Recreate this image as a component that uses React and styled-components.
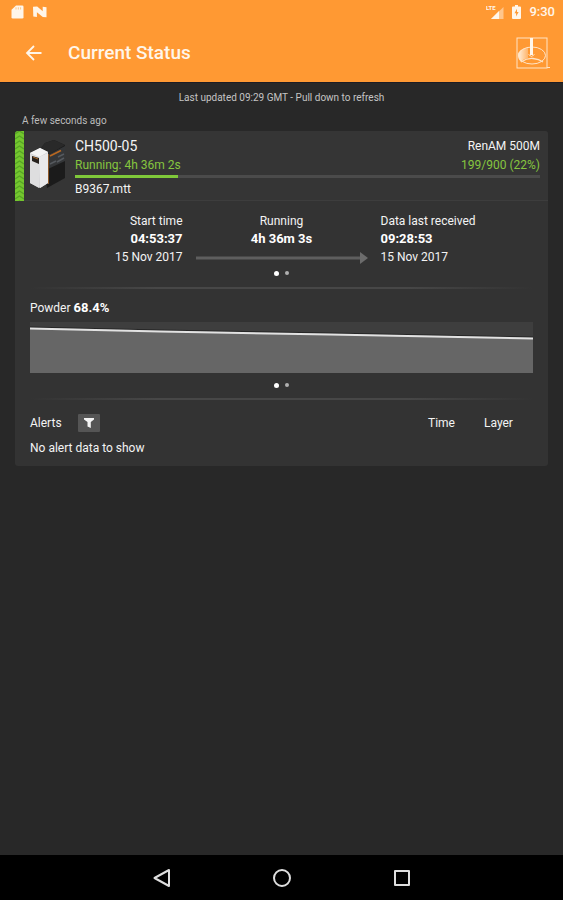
import React from "react";
import styled, { createGlobalStyle, css } from "styled-components";

const GlobalStyle = createGlobalStyle`
  *, *::before, *::after { box-sizing: border-box; }
  body {
    margin: 0;
    background: #282828;
    color: #f4f4f4;
    font-family: Roboto, "Liberation Sans", sans-serif;
    font-size: 12px;
    line-height: 18px;
  }
`;

const Screen = styled.div`
  min-height: 100vh;
  display: flex;
  flex-direction: column;
`;

const Header = styled.header`
  background: #ff9933;
  color: #fff6ea;
  border-bottom: 1px solid #1d1c24;
`;

const StatusBar = styled.div`
  height: 24px;
  padding: 0 8px 0 11px;
  display: flex;
  align-items: center;
  justify-content: space-between;
`;

const StatusGroup = styled.div`
  display: flex;
  align-items: center;
  gap: ${(p) => p.$gap}px;
`;

const Clock = styled.time`
  font-size: 13px;
  font-weight: 500;
`;

const AppBar = styled.div`
  height: 58px;
  padding: 0 12px 0 22px;
  display: flex;
  align-items: center;
`;

const IconButton = styled.button`
  display: flex;
  align-items: center;
  justify-content: center;
  padding: 0;
  border: 0;
  background: none;
  color: inherit;
`;

const PageTitle = styled.h1`
  flex: 1;
  margin: 0 0 0 22px;
  font-size: 19px;
  line-height: 24px;
  font-weight: 500;
`;

const Main = styled.main`
  flex: 1;
  padding: 6px 15px 0;
`;

const Notice = styled.p`
  margin: 0;
  font-size: 10px;
  text-align: center;
  color: #c4c4c4;
`;

const Age = styled.p`
  margin: 6px 0 0 7px;
  font-size: 10px;
  line-height: 16px;
  color: #bcbcbc;
`;

const Card = styled.article`
  margin-top: 2px;
  background: #333333;
  border-radius: 3px;
  overflow: hidden;
`;

const Machine = styled.section`
  display: flex;
  height: 70px;
  padding-right: 8px;
  background: #353535;
  border-bottom: 1px solid #3d3d3d;
`;

const Stripe = styled.svg`
  flex: none;
  width: 9px;
  height: 70px;
`;

const Picture = styled.svg`
  flex: none;
  width: 36px;
  height: 54px;
  margin: 6px 9px 0 6px;
`;

const Details = styled.div`
  flex: 1;
  padding-top: 6px;
`;

const Line = styled.div`
  display: flex;
  align-items: center;
  justify-content: space-between;
  height: ${(p) => (p.$title ? 18 : 20)}px;
  color: ${(p) => (p.$running ? "#86c63f" : "inherit")};
`;

const MachineName = styled.h2`
  margin: 0;
  font-size: 14px;
  font-weight: 400;
`;

const Track = styled.div`
  height: 3px;
  background: #4b4b4b;
`;

const Fill = styled.div`
  height: 100%;
  background: #7fc83a;
`;

const FileName = styled.div`
  margin-top: 2px;
`;

const Times = styled.section`
  display: grid;
  grid-template-columns: 1fr 172px 1fr;
  column-gap: 13px;
  padding-top: 11px;
`;

const TimeBlock = styled.div`
  display: flex;
  flex-direction: column;
  text-align: ${(p) => p.$align};
`;

const Value = styled.strong`
  font-size: 13px;
  font-weight: 700;
  color: #ffffff;
`;

const Arrow = styled.svg`
  width: 100%;
  height: 12px;
  margin-top: 4px;
`;

const Pager = styled.nav`
  display: flex;
  justify-content: center;
  gap: 1px;
  height: 10px;
  margin-top: ${(p) => p.$gap}px;
`;

const PageDot = styled.button`
  display: flex;
  align-items: center;
  justify-content: center;
  width: 10px;
  height: 10px;
  padding: 0;
  border: 0;
  background: none;

  &::before {
    content: "";
    border-radius: 50%;
    ${(p) =>
      p.$current
        ? css`width: 5px; height: 5px; background: #ffffff;`
        : css`width: 4px; height: 4px; background: #b0b0b0;`}
  }
`;

const Divider = styled.hr`
  height: 2px;
  margin: ${(p) => p.$gap}px 15px 0;
  border: 0;
  background: linear-gradient(to right, transparent, #474747 25%, #474747 75%, transparent);
`;

const Powder = styled.section`
  padding: 10px 15px 0;
`;

const SectionTitle = styled.h3`
  margin: 0;
  font-size: 12px;
  font-weight: 400;
`;

const Chart = styled.svg`
  display: block;
  width: 100%;
  height: 51px;
  margin-top: 5px;
  background: #3e3e3e;
`;

const AlertTable = styled.table`
  width: 100%;
  margin: 10px 0 6px;
  border-collapse: collapse;
  table-layout: fixed;

  th, td {
    padding: 0;
    font-weight: 400;
    text-align: left;
  }
  th { height: 26px; }
  td { height: 24px; padding-left: 15px; }
  th:first-child { padding-left: 15px; }
  th:nth-child(2) { width: 56px; }
  th:nth-child(3) { width: 64px; }
`;

const AlertHead = styled.div`
  display: flex;
  align-items: center;
  gap: 16px;
`;

const FilterButton = styled(IconButton)`
  width: 22px;
  height: 18px;
  background: #555555;
  border-radius: 1px;
  color: #f4f4f4;
`;

const SystemNav = styled.nav`
  display: flex;
  justify-content: center;
  height: 45px;
  background: #000000;
  color: #dedede;
`;

const SystemButton = styled(IconButton)`
  width: 120px;
`;

const CHEVRONS = Array.from({ length: 15 }, (_, i) => i * 5);

function Pages({ gap, label }) {
  return (
    <Pager $gap={gap} aria-label={label}>
      <PageDot $current aria-label="Page 1" aria-current="page" />
      <PageDot aria-label="Page 2" />
    </Pager>
  );
}

function TopBar() {
  return (
    <Header>
      <StatusBar>
        <StatusGroup $gap={9}>
          <svg width="13" height="14" viewBox="0 0 13 14" aria-hidden="true">
            <path d="M5 0.5H11.2Q12.5 .5 12.5 1.8V12.2Q12.5 13.5 11.2 13.5H1.8Q.5 13.5 .5 12.2V4.8Z" fill="#fff6ea" />
            <path d="M5 2.3V4.5M7.3 2.3V4.5M9.6 2.3V4.5" stroke="#ffc688" />
          </svg>
          <svg width="14" height="12" viewBox="0 0 14 12" aria-hidden="true">
            <path d="M0 .8L4.2 .5L9.7 5.3V.8L13.5 1.2V11.3L9.8 11L3.9 6.2V11L.3 10.5Z" fill="#fff6ea" />
          </svg>
        </StatusGroup>
        <StatusGroup $gap={8}>
          <svg width="18" height="16" viewBox="0 0 18 16" aria-hidden="true">
            <path d="M17.5 3V15H5Z" fill="#ffc68c" />
            <path d="M13 7V15H5Z" fill="#fff6ea" />
            <text x="0" y="6" fontSize="6" fontWeight="700" fill="#fff6ea">LTE</text>
          </svg>
          <svg width="9" height="14" viewBox="0 0 9 14" aria-hidden="true">
            <path d="M3 0H6V1.5H8Q9 1.5 9 2.5V13Q9 14 8 14H1Q0 14 0 13V2.5Q0 1.5 1 1.5H3Z" fill="#fff6ea" />
            <path d="M5 3.7L2.5 8.3H4.1V11.6L6.6 7H5Z" fill="#ff9933" />
          </svg>
          <Clock>9:30</Clock>
        </StatusGroup>
      </StatusBar>
      <AppBar>
        <IconButton aria-label="Back">
          <svg width="24" height="24" viewBox="0 0 24 24" fill="none" stroke="currentColor" strokeWidth="1.8" aria-hidden="true">
            <path d="M19.5 12H5.5M12 5L5 12L12 19" />
          </svg>
        </IconButton>
        <PageTitle>Current Status</PageTitle>
        <IconButton aria-label="Machine overview">
          <svg width="35" height="32" viewBox="0 0 35 32" fill="none" stroke="#ffe4c6" aria-hidden="true">
            <defs>
              <linearGradient id="sheen">
                <stop offset="0" stopColor="#fff0de" />
                <stop offset="1" stopColor="#ffb469" />
              </linearGradient>
            </defs>
            <rect x="1" y="1" width="30" height="30" />
            <path d="M2 18.5Q2 12 12 10.5V21Q7 22 5 25Q2 22 2 18.5Z" fill="url(#sheen)" stroke="none" />
            <ellipse cx="16" cy="18.5" rx="13.5" ry="8.5" />
            <path d="M5 25Q11 21 17 21.5T27 25" strokeWidth="1.3" />
            <path d="M15.5 1V18" stroke="#fff6ea" strokeWidth="3" />
            <path d="M12.5 17.5L15.5 19.5L18.5 17.5" />
            <path d="M31 30.5H34" />
          </svg>
        </IconButton>
      </AppBar>
    </Header>
  );
}

function MachineSummary() {
  return (
    <Machine>
      <Stripe viewBox="0 0 9 70" aria-hidden="true">
        <rect width="9" height="70" fill="#74c62e" />
        {CHEVRONS.map((y) => (
          <path key={y} d={`M0 ${y + 3}L4.5 ${y}L9 ${y + 3}`} fill="none" stroke="#55a326" strokeWidth="1.2" />
        ))}
      </Stripe>
      <Picture viewBox="0 0 36 54" role="img" aria-label="RenAM 500M">
        <path d="M11 11L15 6L24 3L35 8V41L17 51Z" fill="#1b1b1b" />
        <path d="M11 11L15 6L24 3L35 8L18 18Z" fill="#292929" />
        <path d="M18 18L35 9V24L18 32Z" fill="#343638" />
        <path d="M20 19L31 13.5" stroke="#b86820" strokeWidth="1.6" />
        <path d="M20 27L26 24M28 20L34 17M27 25L34 21" stroke="#55595e" strokeWidth="1.6" />
        <path d="M0 16L10 11L18 15V46L10 51L0 46Z" fill="#d2d2d4" />
        <path d="M0 16L10 11L18 15L9 20Z" fill="#f4f4f4" />
        <path d="M0 17L9 20V51L0 46Z" fill="#dededf" />
        <path d="M9 20L18 16V46L10 51Z" fill="#e9e9eb" />
        <path d="M2 19L9 21V27L2 24Z" fill="#27221e" />
        <path d="M3 20L8 22" stroke="#a9692b" />
        <path d="M18.5 17V47" stroke="#8c5728" />
      </Picture>
      <Details>
        <Line $title>
          <MachineName>CH500-05</MachineName>
          <span>RenAM 500M</span>
        </Line>
        <Line $running>
          <span>Running: 4h 36m 2s</span>
          <span>199/900 (22%)</span>
        </Line>
        <Track role="progressbar" aria-label="Layers" aria-valuenow={199} aria-valuemin={0} aria-valuemax={900}>
          <Fill style={{ width: `${(199 / 900) * 100}%` }} />
        </Track>
        <FileName>B9367.mtt</FileName>
      </Details>
    </Machine>
  );
}

function BuildTimes() {
  return (
    <Times>
      <TimeBlock $align="right">
        <span>Start time</span>
        <Value>04:53:37</Value>
        <span>15 Nov 2017</span>
      </TimeBlock>
      <TimeBlock $align="center">
        <span>Running</span>
        <Value>4h 36m 3s</Value>
        <Arrow viewBox="0 0 172 12" aria-hidden="true">
          <path d="M0 6H165" stroke="#5e5e5e" strokeWidth="3" />
          <path d="M164 0L172 6L164 12Z" fill="#6c6c6c" />
        </Arrow>
      </TimeBlock>
      <TimeBlock $align="left">
        <span>Data last received</span>
        <Value>09:28:53</Value>
        <span>15 Nov 2017</span>
      </TimeBlock>
    </Times>
  );
}

function PowderLevel() {
  return (
    <Powder>
      <SectionTitle>
        Powder <Value>68.4%</Value>
      </SectionTitle>
      <Chart viewBox="0 0 503 51" preserveAspectRatio="none" role="img" aria-label="Powder level over time">
        <path d="M0 6L130 9L300 12L503 16V51H0Z" fill="#666666" />
        <path d="M0 5L130 8L300 11L503 15" fill="none" stroke="#262626" />
        <path d="M0 6.5L130 9.5L300 12.5L503 16.5" fill="none" stroke="#e2e2e2" strokeWidth="2" />
      </Chart>
    </Powder>
  );
}

function Alerts() {
  return (
    <AlertTable>
      <thead>
        <tr>
          <th scope="col">
            <AlertHead>
              Alerts
              <FilterButton aria-label="Filter alerts">
                <svg width="12" height="12" viewBox="0 0 12 12" aria-hidden="true">
                  <path d="M1 1H11V2.5L7.8 5V11L4.5 9.5V5L1 2.5Z" fill="currentColor" />
                </svg>
              </FilterButton>
            </AlertHead>
          </th>
          <th scope="col">Time</th>
          <th scope="col">Layer</th>
        </tr>
      </thead>
      <tbody>
        <tr>
          <td colSpan={3}>No alert data to show</td>
        </tr>
      </tbody>
    </AlertTable>
  );
}

function BottomNav() {
  return (
    <SystemNav aria-label="System">
      <SystemButton aria-label="Back">
        <svg width="20" height="20" viewBox="0 0 20 20" fill="none" stroke="currentColor" strokeWidth="2" strokeLinejoin="round" aria-hidden="true">
          <path d="M17 2V18L2.5 10Z" />
        </svg>
      </SystemButton>
      <SystemButton aria-label="Home">
        <svg width="20" height="20" viewBox="0 0 20 20" fill="none" stroke="currentColor" strokeWidth="2" aria-hidden="true">
          <circle cx="10" cy="10" r="8" />
        </svg>
      </SystemButton>
      <SystemButton aria-label="Recent apps">
        <svg width="20" height="20" viewBox="0 0 20 20" fill="none" stroke="currentColor" strokeWidth="2" strokeLinejoin="round" aria-hidden="true">
          <rect x="3" y="3" width="14" height="14" />
        </svg>
      </SystemButton>
    </SystemNav>
  );
}

export default function App() {
  return (
    <Screen>
      <GlobalStyle />
      <TopBar />
      <Main>
        <Notice>Last updated 09:29 GMT - Pull down to refresh</Notice>
        <Age>A few seconds ago</Age>
        <Card>
          <MachineSummary />
          <BuildTimes />
          <Pages gap={2} label="Build time pages" />
          <Divider $gap={9} />
          <PowderLevel />
          <Pages gap={7} label="Powder pages" />
          <Divider $gap={8} />
          <Alerts />
        </Card>
      </Main>
      <BottomNav />
    </Screen>
  );
}
